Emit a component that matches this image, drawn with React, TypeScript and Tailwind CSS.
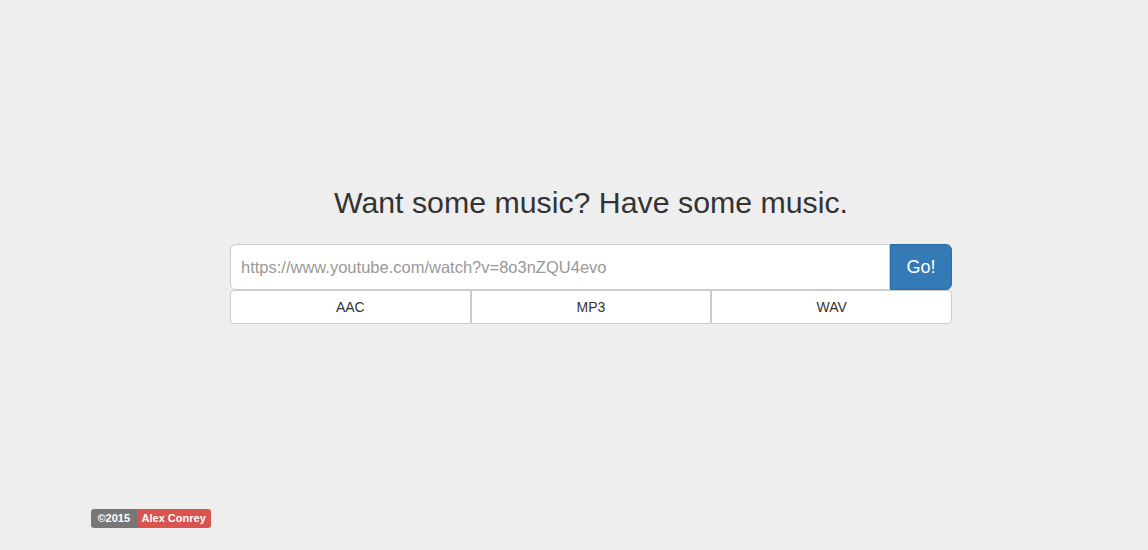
import { useState } from 'react';

const formats = ['AAC', 'MP3', 'WAV'];

export default function App() {
  const [url, setUrl] = useState('');

  return (
    <div
      className="flex min-h-screen flex-col bg-[#eeeeee] text-[#333333]"
      style={{ fontFamily: '"Liberation Sans", Arial, sans-serif' }}
    >
      <main className="ml-[230px] w-[722px] pt-[186px]">
        <h3 className="text-center text-[30.3px] leading-[33px] font-normal text-[#333333]">
          Want some music? Have some music.
        </h3>

        <div className="mt-[25px] flex h-[46px]">
          <input
            value={url}
            onChange={(e) => setUrl(e.target.value)}
            placeholder="https://www.youtube.com/watch?v=8o3nZQU4evo"
            className="h-full flex-1 rounded-l-[6px] border border-[#cccccc] bg-white px-[10px] text-[16.5px] text-[#555555] outline-none placeholder:text-[#999999]"
          />
          <button className="h-full w-[62px] rounded-r-[6px] border border-[#2e6da4] bg-[#337ab7] text-[18px] text-white">
            Go!
          </button>
        </div>

        <div className="flex h-[34px]">
          {formats.map((f, i) => (
            <button
              key={f}
              className={
                'flex-1 border border-[#cccccc] bg-white text-[14px] text-[#333333] ' +
                (i === 0 ? 'rounded-l-[4px]' : i === formats.length - 1 ? 'rounded-r-[4px]' : '')
              }
            >
              {f}
            </button>
          ))}
        </div>
      </main>

      <footer className="mt-auto flex pb-[22px] pl-[91px] text-[11px] font-bold text-white">
        <span className="flex h-[19px] items-center rounded-l-[3px] bg-[#777777] px-[6.5px]">©2015</span>
        <span className="flex h-[19px] items-center rounded-r-[3px] bg-[#d9534f] px-[5px]">Alex Conrey</span>
      </footer>
    </div>
  );
}
